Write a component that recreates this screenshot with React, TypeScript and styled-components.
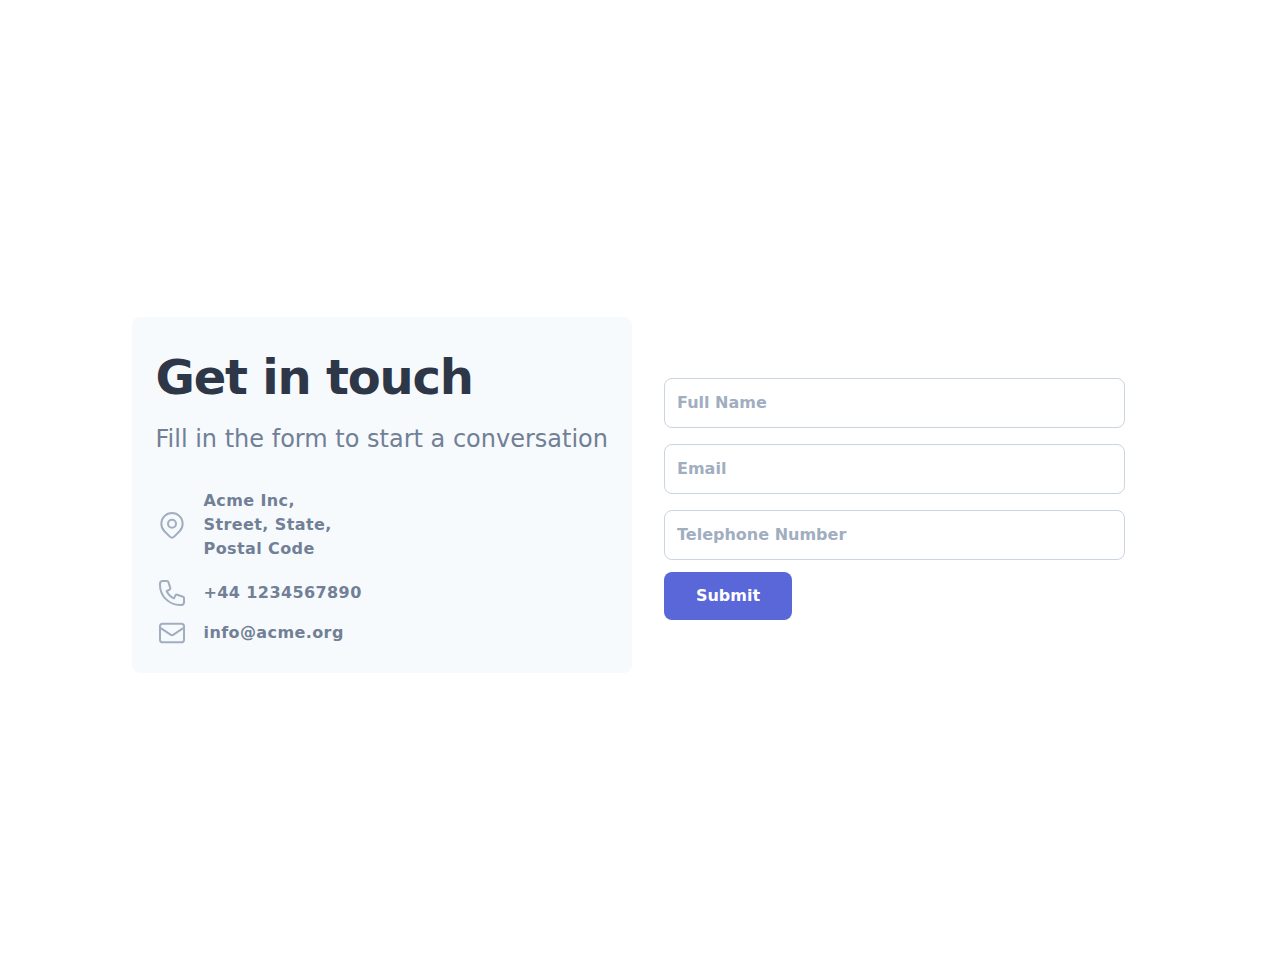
import React from "react";
import styled, { createGlobalStyle } from "styled-components";

const GlobalStyle = createGlobalStyle`
  *, *::before, *::after { box-sizing: border-box; }
  body {
    margin: 0;
    background: #ffffff;
    font-family: "DejaVu Sans", sans-serif;
    font-size: 16px;
    line-height: 1.5;
  }
`;

const Page = styled.main`
  display: flex;
  align-items: center;
  justify-content: center;
  min-height: 100vh;
`;

const ContactGrid = styled.div`
  display: grid;
  grid-template-columns: 1fr;
  margin-top: 32px;

  @media (min-width: 768px) {
    grid-template-columns: repeat(2, minmax(0, 1fr));
  }
`;

const InfoPanel = styled.section`
  margin-right: 8px;
  padding: 24px;
  border-radius: 8px;
  background: #f7fafc;
`;

const Title = styled.h1`
  margin: 0;
  color: #2d3748;
  font-size: 48px;
  font-weight: 800;
  letter-spacing: -0.025em;
`;

const Lead = styled.p`
  margin: 8px 0 0;
  color: #718096;
  font-size: 24px;
  font-weight: 500;
`;

const ContactItem = styled.div<{ $gap: number }>`
  display: flex;
  align-items: center;
  margin-top: ${({ $gap }) => $gap}px;
  color: #718096;
`;

const Icon = styled.svg`
  flex: none;
  width: 32px;
  height: 32px;
  color: #a0aec0;
  fill: none;
  stroke: currentColor;
  stroke-width: 1.5;
  stroke-linecap: round;
  stroke-linejoin: round;
`;

const ContactText = styled.div`
  width: 160px;
  margin-left: 16px;
  font-weight: 600;
  letter-spacing: 0.025em;
`;

const Form = styled.form`
  display: flex;
  flex-direction: column;
  justify-content: center;
  padding: 24px;
`;

const Field = styled.div<{ $gap: number }>`
  display: flex;
  flex-direction: column;
  margin-top: ${({ $gap }) => $gap}px;
`;

const HiddenLabel = styled.label`
  display: none;
`;

const Input = styled.input`
  width: 100%;
  height: 50px;
  padding: 12px;
  border: 1px solid #cbd5e0;
  border-radius: 8px;
  background: #ffffff;
  color: #2d3748;
  font: inherit;
  font-weight: 600;

  &::placeholder {
    color: #a0aec0;
    opacity: 1;
  }

  &:focus {
    border-color: #667eea;
    outline: none;
  }
`;

const SubmitButton = styled.button`
  width: 128px;
  margin-top: 12px;
  padding: 12px 24px;
  border: 0;
  border-radius: 8px;
  background: #5a67d8;
  color: #ffffff;
  font: inherit;
  font-weight: 700;
  cursor: pointer;

  &:hover {
    background: #667eea;
  }
`;

const fields = [
  { id: "name", label: "Full Name", type: "text" },
  { id: "email", label: "Email", type: "email" },
  { id: "tel", label: "Telephone Number", type: "tel" },
];

export default function App() {
  return (
    <>
      <GlobalStyle />
      <Page>
        <ContactGrid>
          <InfoPanel>
            <Title>Get in touch</Title>
            <Lead>Fill in the form to start a conversation</Lead>

            <ContactItem $gap={32}>
              <Icon viewBox="0 0 24 24" aria-hidden="true">
                <path d="M17.657 16.657L13.414 20.9a1.998 1.998 0 01-2.827 0l-4.244-4.243a8 8 0 1111.314 0z" />
                <path d="M15 11a3 3 0 11-6 0 3 3 0 016 0z" />
              </Icon>
              <ContactText>Acme Inc, Street, State, Postal Code</ContactText>
            </ContactItem>

            <ContactItem $gap={16}>
              <Icon viewBox="0 0 24 24" aria-hidden="true">
                <path d="M3 5a2 2 0 012-2h3.28a1 1 0 01.948.684l1.498 4.493a1 1 0 01-.502 1.21l-2.257 1.13a11.042 11.042 0 005.516 5.516l1.13-2.257a1 1 0 011.21-.502l4.493 1.498a1 1 0 01.684.949V19a2 2 0 01-2 2h-1C9.716 21 3 14.284 3 6V5z" />
              </Icon>
              <ContactText>+44 1234567890</ContactText>
            </ContactItem>

            <ContactItem $gap={8}>
              <Icon viewBox="0 0 24 24" aria-hidden="true">
                <path d="M3 8l7.89 5.26a2 2 0 002.22 0L21 8M5 19h14a2 2 0 002-2V7a2 2 0 00-2-2H5a2 2 0 00-2 2v10a2 2 0 002 2z" />
              </Icon>
              <ContactText>info@acme.org</ContactText>
            </ContactItem>
          </InfoPanel>

          <Form onSubmit={(event) => event.preventDefault()}>
            {fields.map((field, index) => (
              <Field key={field.id} $gap={index === 0 ? 8 : 16}>
                <HiddenLabel htmlFor={field.id}>{field.label}</HiddenLabel>
                <Input
                  id={field.id}
                  name={field.id}
                  type={field.type}
                  placeholder={field.label}
                />
              </Field>
            ))}
            <SubmitButton type="submit">Submit</SubmitButton>
          </Form>
        </ContactGrid>
      </Page>
    </>
  );
}
